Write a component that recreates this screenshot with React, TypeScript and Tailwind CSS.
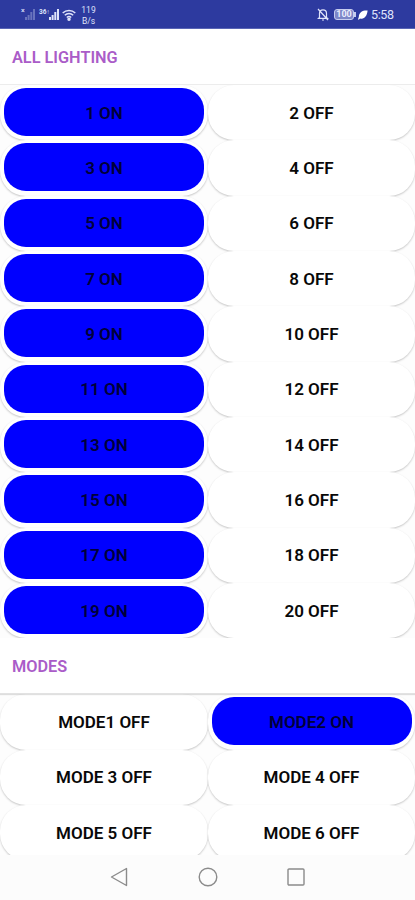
import clsx from "clsx";

type Toggle = { label: string; on: boolean };

const lights: Toggle[] = Array.from({ length: 20 }, (_, i) => {
  const on = i % 2 === 0;
  return { label: `${i + 1} ${on ? "ON" : "OFF"}`, on };
});

const modes: Toggle[] = [
  { label: "MODE1 OFF", on: false },
  { label: "MODE2 ON", on: true },
  { label: "MODE 3 OFF", on: false },
  { label: "MODE 4 OFF", on: false },
  { label: "MODE 5 OFF", on: false },
  { label: "MODE 6 OFF", on: false },
];

function SignalIcon({ className }: { className?: string }) {
  return (
    <svg viewBox="0 0 10 11" className={clsx("w-[10px] h-[11px]", className)} fill="currentColor">
      <rect x="0" y="8" width="2" height="3" />
      <rect x="2.6" y="6" width="2" height="5" />
      <rect x="5.3" y="3" width="2" height="8" />
      <rect x="8" y="0" width="2" height="11" />
    </svg>
  );
}

function StatusBar() {
  return (
    <header className="h-[29px] shrink-0 flex justify-between bg-[#2d3a9f] border-b border-[#5965b5] pl-[21px] pr-[21px] text-[#dfe3fa]">
      <div className="flex items-start">
        <div className="flex mt-[9px]">
          <span className="text-[7px] leading-[5px] w-[4px] font-bold text-[#d5daf5]">×</span>
          <SignalIcon className="text-[#6873bd]" />
        </div>
        <div className="flex mt-[9px] ml-[4px]">
          <span className="text-[6.5px] leading-[6px] w-[10px] font-bold whitespace-nowrap">36↑</span>
          <SignalIcon />
        </div>
        <svg viewBox="0 0 14 12" className="w-[14px] h-[12px] mt-[9px] ml-[3px]" fill="none" stroke="currentColor" strokeWidth="1.5">
          <path d="M.7 4a9 9 0 0 1 12.6 0M2.8 6.3a6 6 0 0 1 8.4 0M4.8 8.5a3.2 3.2 0 0 1 4.4 0" />
          <circle cx="7" cy="10.2" r="1" fill="currentColor" />
        </svg>
        <div className="ml-[4px] mt-[5px] w-[17px] text-center text-[8.5px] leading-[10.5px]">
          <div>119</div>
          <div>B/s</div>
        </div>
      </div>
      <div className="flex items-center pt-[1px]">
        <svg viewBox="0 0 12 13" className="w-[12px] h-[13px]" fill="none" stroke="currentColor" strokeWidth="1.2">
          <path d="M2.5 9.5V5.4a3.5 3.5 0 0 1 7 0v4.1l1 .9h-9zM5 12h2M1 1l10 11" />
        </svg>
        <div className="ml-[5px] w-[20px] h-[11px] rounded-[3px] border border-[#c6ccee] bg-[#7c86c8] text-[9px] leading-[9px] font-bold text-center text-[#eceefc]">
          100
        </div>
        <div className="w-[2px] h-[5px] bg-[#c6ccee]" />
        <svg viewBox="0 0 10 10" className="ml-[2px] w-[10px] h-[10px]" fill="white">
          <path d="M9.600.6C5 .2 1 2 .8 7L0 9.300l.7.5L2 8.500C6.500 9.700 9 6 9.600.6z" />
        </svg>
        <span className="ml-[3px] text-[12.5px] leading-[14px] w-[23px] whitespace-nowrap tracking-[-0.4px]">5:58</span>
      </div>
    </header>
  );
}

function SectionTitle({ children, className }: { children: string; className?: string }) {
  return (
    <h2
      className={clsx(
        "relative z-10 h-[56px] shrink-0 bg-white pl-[12px] pt-[1px] leading-[56px] text-[16.3px] font-semibold text-[#aa5cc8] border-b",
        className
      )}
    >
      {children}
    </h2>
  );
}

function ToggleButton({ label, on }: Toggle) {
  return (
    <button className="h-[55.35px] rounded-[26px] bg-white pl-[4px] pr-[3.500px] pt-[3px] pb-[4.300px] shadow-[0_1px_2px_rgba(0,0,0,0.22)]">
      <span
        className={clsx(
          "flex h-full items-center justify-center rounded-[22px] pt-[2.500px] text-[17px] font-semibold",
          on ? "bg-[#0000ff] text-[#000038]" : "bg-white text-[#080808]"
        )}
      >
        {label}
      </span>
    </button>
  );
}

function ToggleGrid({ items }: { items: Toggle[] }) {
  return (
    <div className="grid shrink-0 grid-cols-2 bg-[#fdfdfd]">
      {items.map((item) => (
        <ToggleButton key={item.label} {...item} />
      ))}
    </div>
  );
}

function NavBar() {
  return (
    <nav className="h-[45px] shrink-0 flex items-center justify-center gap-[68px] bg-[#fcfcfc] pb-[1px] text-[#8b8b8b]">
      <svg viewBox="0 0 20 20" className="w-[20px] h-[20px]" fill="none" stroke="currentColor" strokeWidth="1.4" strokeLinejoin="round">
        <path d="M16.500 1.500v17L1.500 10z" />
      </svg>
      <svg viewBox="0 0 20 20" className="w-[20px] h-[20px]" fill="none" stroke="currentColor" strokeWidth="1.4">
        <circle cx="10" cy="10" r="8.800" />
      </svg>
      <svg viewBox="0 0 20 20" className="w-[20px] h-[20px]" fill="none" stroke="currentColor" strokeWidth="1.4">
        <rect x="2" y="2" width="16" height="16" rx="1" />
      </svg>
    </nav>
  );
}

export default function App() {
  return (
    <div className="flex h-[900px] w-[415px] flex-col overflow-hidden bg-white font-['Roboto',sans-serif]">
      <StatusBar />
      <main className="flex min-h-0 flex-1 flex-col overflow-hidden">
        <SectionTitle className="border-[#ececec]">ALL LIGHTING</SectionTitle>
        <ToggleGrid items={lights} />
        <SectionTitle className="border-[#e2e2e2] shadow-[0_1px_1px_rgba(0,0,0,0.12)]">MODES</SectionTitle>
        <ToggleGrid items={modes} />
      </main>
      <NavBar />
    </div>
  );
}
